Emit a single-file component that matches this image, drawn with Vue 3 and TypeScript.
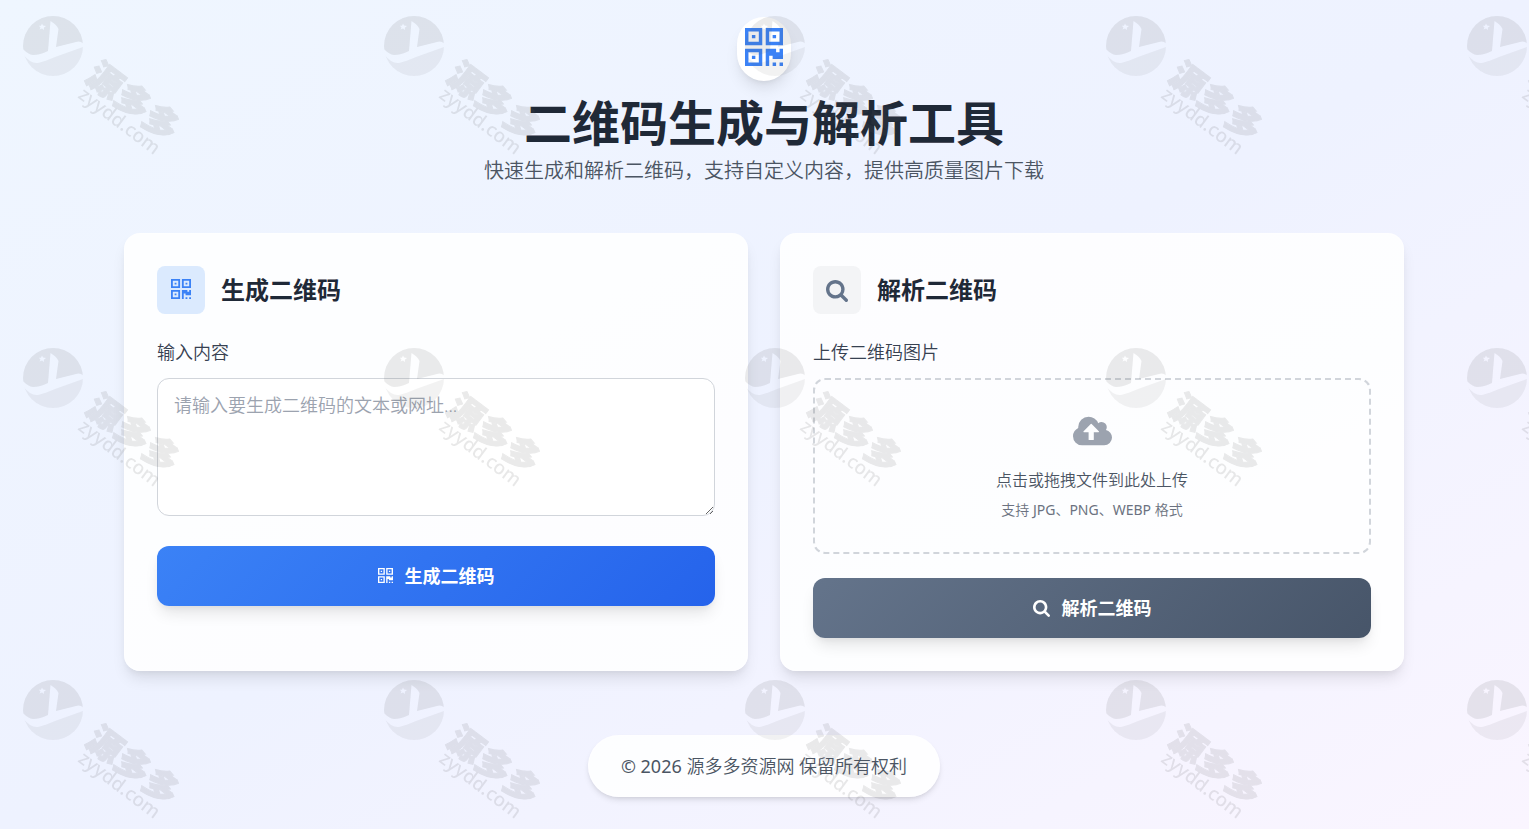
<script setup lang="ts">
import { ref } from 'vue'

const content = ref('')
const fileName = ref('')

const qrPath =
  'M0 0h5v5H0zM1 1v3h3V1zM2 2h1v1H2zM6 0h5v5H6zM7 1v3h3V1zM8 2h1v1H8zM0 6h5v5H0zM1 7v3h3V7zM2 8h1v1H2zM8 10h1v1H8zM10 10h1v1h-1zM11 6v3H8V8H7v3H6V6h3v1h1V6z'
const searchPath =
  'M1152 704q0-185-131.500-316.500t-316.500-131.500-316.500 131.500-131.500 316.500 131.500 316.500 316.500 131.500 316.500-131.500 131.500-316.500zm512 832q0 52-38 90t-90 38q-54 0-90-38l-343-342q-179 124-399 124-143 0-273.500-55.500t-225-150-150-225-55.500-273.500 55.500-273.500 150-225 225-150 273.500-55.500 273.500 55.500 225 150 150 225 55.500 273.500q0 220-124 399l343 343q37 37 37 90z'

function onFile(event: Event) {
  const input = event.target as HTMLInputElement
  fileName.value = input.files?.[0]?.name ?? ''
}
</script>

<template>
  <div class="page">
    <header class="hero">
      <div class="hero-badge">
        <svg class="hero-icon" viewBox="0 0 11 11" aria-hidden="true"><path fill-rule="evenodd" :d="qrPath" /></svg>
      </div>
      <h1>二维码生成与解析工具</h1>
      <p>快速生成和解析二维码，支持自定义内容，提供高质量图片下载</p>
    </header>

    <main class="cards">
      <section class="card">
        <div class="card-head">
          <span class="card-icon blue">
            <svg class="qr" viewBox="0 0 11 11" aria-hidden="true"><path fill-rule="evenodd" :d="qrPath" /></svg>
          </span>
          <h2>生成二维码</h2>
        </div>
        <label class="field-label" for="content">输入内容</label>
        <textarea id="content" v-model="content" placeholder="请输入要生成二维码的文本或网址..."></textarea>
        <button type="button" class="action primary">
          <svg class="qr" viewBox="0 0 11 11" aria-hidden="true"><path fill-rule="evenodd" :d="qrPath" /></svg>
          <span>生成二维码</span>
        </button>
      </section>

      <section class="card">
        <div class="card-head">
          <span class="card-icon gray">
            <svg class="search" viewBox="0 0 1664 1664" aria-hidden="true"><path :d="searchPath" /></svg>
          </span>
          <h2>解析二维码</h2>
        </div>
        <label class="field-label" for="picture">上传二维码图片</label>
        <label class="upload" for="picture">
          <svg class="cloud" viewBox="0 0 1920 1408" aria-hidden="true">
            <path
              d="M1280 736q0-14-9-23l-352-352q-9-9-23-9t-23 9l-351 351q-10 12-10 24 0 14 9 23t23 9h224v352q0 13 9.500 22.500t22.500 9.500h192q13 0 22.500-9.500t9.500-22.500v-352h224q13 0 22.500-9.500t9.500-22.500zm640 288q0 159-112.500 271.500t-271.500 112.500h-1088q-185 0-316.500-131.500t-131.500-316.500q0-130 70-240t188-165q-2-30-2-43 0-212 150-362t362-150q156 0 285.500 87t188.500 231q71-62 166-62 106 0 181 75t75 181q0 76-41 138 130 31 213.500 135.500t83.500 238.500z"
            />
          </svg>
          <span class="upload-title">{{ fileName || '点击或拖拽文件到此处上传' }}</span>
          <span class="upload-hint">支持 JPG、PNG、WEBP 格式</span>
          <input id="picture" class="file" type="file" accept="image/*" @change="onFile" />
        </label>
        <button type="button" class="action secondary">
          <svg class="search" viewBox="0 0 1664 1664" aria-hidden="true"><path :d="searchPath" /></svg>
          <span>解析二维码</span>
        </button>
      </section>
    </main>

    <footer class="foot">© 2026 源多多资源网 保留所有权利</footer>

    <svg class="watermark" aria-hidden="true">
      <defs>
        <clipPath id="disc"><circle cx="53" cy="46" r="30" /></clipPath>
        <pattern id="mark" width="361" height="332" patternUnits="userSpaceOnUse">
          <g clip-path="url(#disc)">
            <path
              class="mark-dark"
              fill-rule="evenodd"
              d="M20 10H86V47Q82 40 76 42L56 47L58.500 29Q56 24 50.500 21L48 51Q40 55 33 55Q27 54 20 46ZM42 23.500L43 25.600L46 26L43.800 27.800L44 30L42 28.600L39.500 29.500L40.500 27.500L38.800 25.800L41 25.800Z"
            />
            <path class="mark-light" d="M20 50Q29 64 38 63Q46 61 55 57L86 46V80H20Z" />
          </g>
          <g transform="translate(133 102) rotate(37)">
            <text class="mark-name" text-anchor="middle" y="12">源多多</text>
          </g>
          <g transform="translate(118 123) rotate(37)">
            <text class="mark-site" text-anchor="middle" y="4">zyydd.com</text>
          </g>
        </pattern>
      </defs>
      <rect width="100%" height="100%" fill="url(#mark)" />
    </svg>
  </div>
</template>

<style>
body {
  margin: 0;
}
</style>

<style scoped>
.page,
.page * {
  box-sizing: border-box;
}
.page {
  position: relative;
  min-height: 100vh;
  padding: 17px 33px 32px 32px;
  display: flex;
  flex-direction: column;
  align-items: center;
  font-family: 'Noto Sans', 'Noto Sans CJK SC', sans-serif;
  font-weight: 350;
  color: #1f2937;
  background: linear-gradient(to bottom right, #eff6ff, #eef2ff 50%, #faf5ff);
}
.hero {
  display: flex;
  flex-direction: column;
  align-items: center;
  text-align: center;
}
.hero-badge {
  width: 54px;
  height: 64px;
  padding-top: 11px;
  display: flex;
  align-items: flex-start;
  justify-content: center;
  border-radius: 27px;
  background: #fff;
  box-shadow: 0 10px 15px -3px rgba(0, 0, 0, 0.1), 0 4px 6px -4px rgba(0, 0, 0, 0.1);
}
.hero-icon {
  width: 38px;
  height: 38px;
  fill: #3b82f6;
}
h1 {
  margin: 12px 0 4px;
  font-size: 48px;
  line-height: 60px;
  font-weight: 700;
}
.hero p {
  margin: 0;
  font-size: 20px;
  line-height: 28px;
  color: #4b5563;
}
.cards {
  width: 100%;
  max-width: 1280px;
  margin-top: 48px;
  display: grid;
  grid-template-columns: 1fr 1fr;
  gap: 32px;
}
.card {
  display: flex;
  flex-direction: column;
  padding: 32px;
  border: 1px solid rgba(255, 255, 255, 0.5);
  border-radius: 16px;
  background: rgba(255, 255, 255, 0.85);
  box-shadow: 0 10px 15px -3px rgba(0, 0, 0, 0.1), 0 4px 6px -2px rgba(0, 0, 0, 0.05);
}
.card-head {
  display: flex;
  align-items: center;
  gap: 16px;
  margin-bottom: 24px;
}
.card-icon {
  width: 48px;
  height: 48px;
  display: flex;
  align-items: center;
  justify-content: center;
  border-radius: 8px;
}
.card-icon.blue {
  background: #dbeafe;
  fill: #3b82f6;
}
.card-icon.gray {
  background: #f3f4f6;
  fill: #64748b;
}
.qr {
  margin-bottom: 2px;
}
.card-icon .qr {
  width: 20px;
  height: 20px;
}
.card-icon .search {
  width: 22px;
  height: 22px;
  margin-top: 2px;
}
h2 {
  margin: 0;
  font-size: 24px;
  line-height: 32px;
  font-weight: 700;
}
.field-label {
  margin-bottom: 12px;
  font-size: 18px;
  line-height: 28px;
  color: #374151;
}
textarea {
  display: block;
  width: 100%;
  height: 138px;
  margin: 0 0 30px;
  padding: 12px 16px;
  border: 1px solid #d1d5db;
  border-radius: 12px;
  outline: none;
  background: #fff;
  font: inherit;
  font-size: 18px;
  line-height: 28px;
  color: #1f2937;
  resize: vertical;
}
textarea::placeholder {
  color: #9ca3af;
}
textarea:focus {
  border-color: #3b82f6;
}
.action {
  display: flex;
  align-items: center;
  justify-content: center;
  gap: 12px;
  width: 100%;
  padding: 16px 24px;
  border: 0;
  border-radius: 12px;
  font: inherit;
  font-size: 18px;
  line-height: 28px;
  font-weight: 700;
  color: #fff;
  fill: #fff;
  cursor: pointer;
  box-shadow: 0 10px 15px -3px rgba(0, 0, 0, 0.1), 0 4px 6px -2px rgba(0, 0, 0, 0.05);
}
.action .qr {
  width: 15px;
  height: 15px;
}
.action .search {
  width: 17px;
  height: 17px;
}
.primary {
  background: linear-gradient(135deg, #3b82f6, #2563eb);
}
.secondary {
  background: linear-gradient(135deg, #64748b, #475569);
}
.upload {
  position: relative;
  display: flex;
  flex-direction: column;
  align-items: center;
  margin-bottom: 24px;
  padding: 32px;
  border: 2px dashed #d1d5db;
  border-radius: 12px;
  cursor: pointer;
}
.cloud {
  width: 39px;
  height: 38px;
  margin-bottom: 18px;
  fill: #9ca3af;
}
.upload-title {
  margin-bottom: 8px;
  font-size: 16px;
  line-height: 24px;
  color: #4b5563;
}
.upload-hint {
  font-family: 'Noto Sans', 'Noto Sans CJK SC DemiLight', 'Noto Sans CJK SC', sans-serif;
  font-size: 14px;
  line-height: 20px;
  font-weight: 400;
  color: #6b7280;
}
.file {
  position: absolute;
  inset: 0;
  opacity: 0;
  pointer-events: none;
}
.foot {
  margin-top: 64px;
  padding: 16px 32px;
  border: 1px solid rgba(255, 255, 255, 0.5);
  border-radius: 31px;
  background: rgba(255, 255, 255, 0.85);
  font-family: 'Noto Sans', 'Noto Sans CJK SC DemiLight', 'Noto Sans CJK SC', sans-serif;
  font-size: 18px;
  line-height: 28px;
  font-weight: 400;
  color: #4b5563;
  box-shadow: 0 4px 6px -1px rgba(0, 0, 0, 0.1), 0 2px 4px -2px rgba(0, 0, 0, 0.1);
}
.watermark {
  position: absolute;
  inset: 0;
  width: 100%;
  height: 100%;
  pointer-events: none;
}
.mark-dark {
  fill: rgba(90, 90, 90, 0.12);
}
.mark-light {
  fill: rgba(90, 90, 90, 0.08);
}
.mark-name {
  fill: #5a5a5a;
  stroke: #5a5a5a;
  stroke-width: 1px;
  opacity: 0.13;
  font-size: 35px;
  font-weight: 900;
}
.mark-site {
  fill: rgba(90, 90, 90, 0.14);
  font-size: 19px;
  font-weight: 500;
}
</style>
